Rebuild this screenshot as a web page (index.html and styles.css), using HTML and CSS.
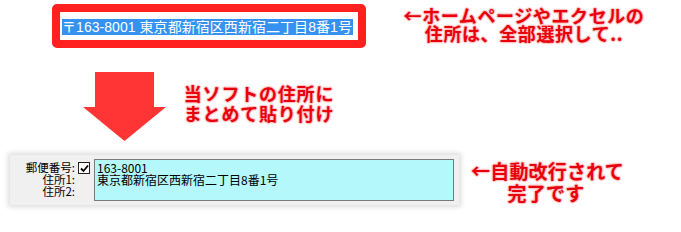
FILE: index.html
```html
<!DOCTYPE html>
<html lang="ja">
<head>
<meta charset="utf-8">
<link rel="stylesheet" href="styles.css">
</head>
<body>
<div class="page">
  <div class="row row-top">
    <div class="redbox">
      <div class="field"><span class="sel">〒163-8001 東京都新宿区西新宿二丁目8番1号</span></div>
    </div>
    <div class="note note-top">←ホームページやエクセルの<br>住所は、全部選択して..</div>
  </div>
  <div class="row row-mid">
    <svg class="arrow" width="83" height="69" viewBox="0 0 83 69">
      <polygon points="12,0 71,0 71,35 83,35 41.5,69 0,35 12,35" fill="#ff3535"/>
    </svg>
    <div class="note note-mid">当ソフトの住所に<br>まとめて貼り付け</div>
  </div>
  <div class="row row-bot">
    <div class="panel">
      <div class="labels">
        <div class="lbl">郵便番号:</div>
        <div class="lbl">住所1:</div>
        <div class="lbl">住所2:</div>
      </div>
      <div class="check">
        <svg width="9" height="9" viewBox="0 0 9 9"><path d="M1 4.5 L3.5 7 L8 1.5" fill="none" stroke="#000" stroke-width="1.8"/></svg>
      </div>
      <div class="addr">
        <div class="line">163-8001</div>
        <div class="line">東京都新宿区西新宿二丁目8番1号</div>
      </div>
    </div>
    <div class="note note-bot">←自動改行されて<br>完了です</div>
  </div>
</div>
</body>
</html>
```
FILE: styles.css
```css
html, body {
  margin: 0;
  padding: 0;
  background: #ffffff;
}
body {
  font-family: "Noto Sans CJK JP", "Noto Sans", sans-serif;
  width: 681px;
  height: 232px;
  overflow: hidden;
}
.page {
  display: flex;
  flex-direction: column;
}
.row {
  display: flex;
  align-items: flex-start;
}
.row-top {
  height: 48px;
  padding-left: 52px;
}
.redbox {
  margin-top: 4px;
  width: 298px;
  height: 28px;
  border: 8px solid #ff2020;
  border-radius: 5px;
  background: #ffffff;
}
.field {
  padding: 1px 0 0 2px;
  white-space: nowrap;
}
.sel {
  display: inline-block;
  background: #3592f0;
  color: #ffffff;
  font-family: "Liberation Sans", "Noto Sans CJK JP", sans-serif;
  font-size: 14px;
  line-height: 16px;
  padding-right: 1px;
  letter-spacing: 0.05px;
}
.note {
  color: #e8000c;
  font-weight: 700;
  text-align: center;
  white-space: nowrap;
  text-shadow: 0 0 1px #ffb0b0, 1px 0 1px #ffc4c4, -1px 0 1px #ffc4c4, 0 1px 1px #ffc4c4, 0 -1px 1px #ffc4c4, 0 0 3px #ffd0d0;
}
.note-top {
  margin-left: 28px;
  margin-top: 6px;
  width: 260px;
  font-size: 18px;
  line-height: 18px;
  letter-spacing: 0.6px;
}
.row-mid {
  height: 107px;
  padding-left: 83px;
}
.arrow {
  margin-top: 24px;
  display: block;
}
.note-mid {
  margin-left: 3px;
  margin-top: 35px;
  width: 180px;
  font-size: 18px;
  line-height: 20px;
  letter-spacing: 0.8px;
}
.row-bot {
  padding-left: 10px;
}
.panel {
  width: 449px;
  height: 50px;
  background: #f0f0f0;
  box-shadow: 0 0 5px 2px rgba(0, 0, 0, 0.14);
  display: flex;
  align-items: flex-start;
  font-size: 12px;
  line-height: 12px;
  color: #000;
}
.labels {
  width: 65px;
  margin-top: 6px;
  text-align: right;
}
.lbl,
.line {
  height: 12px;
  line-height: 12px;
  font-size: 11.5px;
  white-space: nowrap;
}
.check {
  margin: 7px 0 0 3px;
  width: 10px;
  height: 10px;
  border: 1px solid #222;
  background: #fff;
  display: flex;
  align-items: center;
  justify-content: center;
}
.check svg {
  display: block;
}
.addr {
  margin: 4px 0 0 4px;
  width: 356px;
  height: 38px;
  padding: 2px 0 0 2px;
  background: #b4f8fb;
  border: 1px solid #7a7a7a;
}
.line {
  font-size: 12px;
}
.note-bot {
  margin-left: 12px;
  margin-top: 5px;
  width: 150px;
  font-size: 19px;
  line-height: 22px;
  letter-spacing: 0.2px;
}
```
